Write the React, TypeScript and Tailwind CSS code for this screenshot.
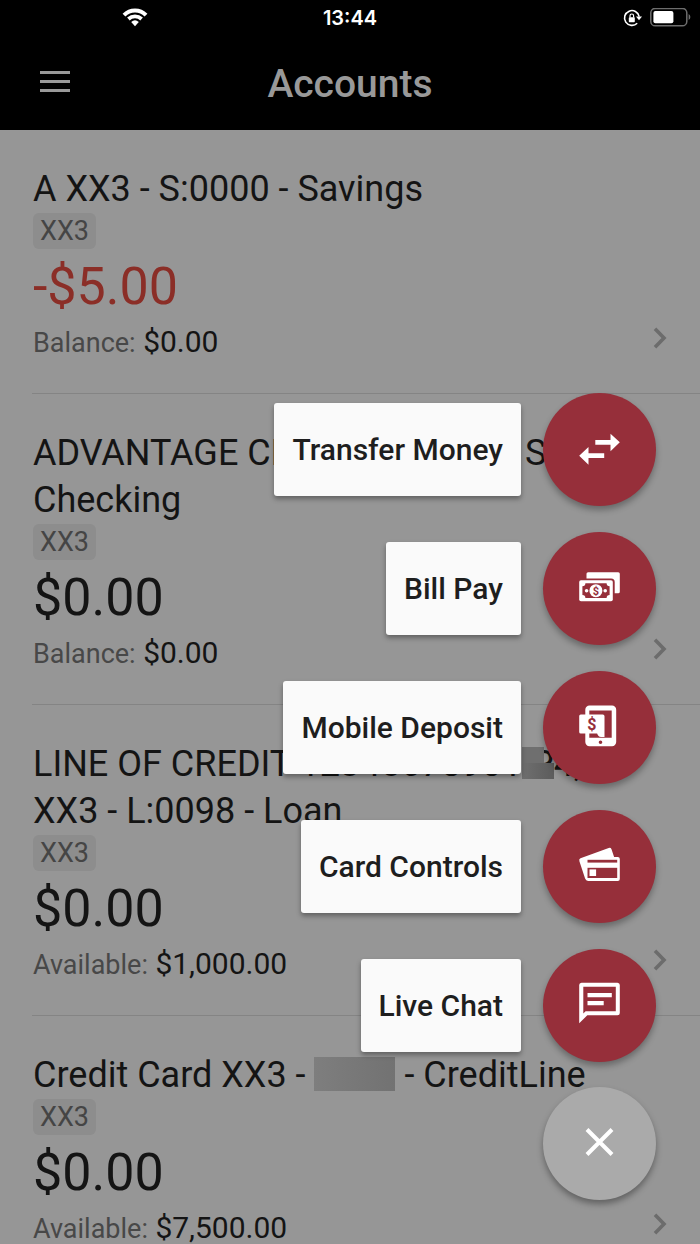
import { useState } from "react";
import type { ReactNode } from "react";

type Account = {
  id: string;
  title: ReactNode;
  badge: string;
  amount: string;
  negative?: boolean;
  label: string;
  value: string;
};

const accounts: Account[] = [
  {
    id: "savings",
    title: "A XX3 - S:0000 - Savings",
    badge: "XX3",
    amount: "-$5.00",
    negative: true,
    label: "Balance:",
    value: "$0.00",
  },
  {
    id: "checking",
    title: "ADVANTAGE CHECKING XX3 - S:0000 - Checking",
    badge: "XX3",
    amount: "$0.00",
    label: "Balance:",
    value: "$0.00",
  },
  {
    id: "loan",
    title: (
      <>
        LINE OF CREDIT 12345678901
        <span className="relative">
          {"\u00a0"}P4
          <span className="absolute top-1 left-0 h-4 w-[22px] bg-[#6f6f6f]" />
          <span className="absolute top-5 left-0 h-4 w-8 bg-linear-to-r from-[#6f6f6f] to-[#5c5c5c]" />
        </span>
        , <span className="whitespace-nowrap">XX3 - L:0098</span> - Loan
      </>
    ),
    badge: "XX3",
    amount: "$0.00",
    label: "Available:",
    value: "$1,000.00",
  },
  {
    id: "credit",
    title: (
      <>
        Credit Card XX3 -{" "}
        <span className="inline-block h-[34px] w-[81px] bg-linear-to-r from-[#7e7e7e] to-[#727272] align-[-4px]" />{" "}
        - CreditLine
      </>
    ),
    badge: "XX3",
    amount: "$0.00",
    label: "Available:",
    value: "$7,500.00",
  },
];

const actions: { label: string; icon: ReactNode }[] = [
  { label: "Transfer Money", icon: <TransferIcon /> },
  { label: "Bill Pay", icon: <BillIcon /> },
  { label: "Mobile Deposit", icon: <DepositIcon /> },
  { label: "Card Controls", icon: <CardsIcon /> },
  { label: "Live Chat", icon: <ChatIcon /> },
];

function Icon({ children }: { children: ReactNode }) {
  return (
    <svg viewBox="0 0 48 48" className="size-12" fill="#fff" aria-hidden="true">
      {children}
    </svg>
  );
}

function TransferIcon() {
  return (
    <Icon>
      <path d="M19.3 14H34.5V7.7L43.8 16.3L34.5 25.3V18.7H19.3Z" />
      <path d="M28.2 32H12.5V38.7L3.2 29.7L12.5 21V27.3H28.2Z" />
    </Icon>
  );
}

function BillIcon() {
  return (
    <Icon>
      <path d="M12.1 7.2H42.2A1.6 1.6 0 0 1 43.8 8.8V26.7A1.6 1.6 0 0 1 42.2 28.3H38.7V17.1A3.6 3.6 0 0 0 35.1 13.5H10.5V8.8A1.6 1.6 0 0 1 12.1 7.2Z" />
      <rect x="3.2" y="15.2" width="33.6" height="21" rx="1.8" />
      <path
        d="M9.4 18.3H30.6A3 3 0 0 0 33.6 21.3V30.1A3 3 0 0 0 30.6 33.1H9.4A3 3 0 0 0 6.4 30.1V21.3A3 3 0 0 0 9.4 18.3Z"
        fill="#962f3a"
      />
      <circle cx="10.6" cy="25.7" r="1.8" />
      <circle cx="29.2" cy="25.7" r="1.8" />
      <circle cx="19.9" cy="25.7" r="6.5" />
      <text x="19.9" y="29.5" textAnchor="middle" fontFamily="Roboto, sans-serif" fontSize="11" fontWeight="700" fill="#962f3a">
        $
      </text>
    </Icon>
  );
}

function DepositIcon() {
  return (
    <Icon>
      <path
        fillRule="evenodd"
        d="M13.5 1.5H36A4.2 4.2 0 0 1 40.2 5.7V38A4.2 4.2 0 0 1 36 42.2H13.5A4.2 4.2 0 0 1 9.3 38V5.7A4.2 4.2 0 0 1 13.5 1.5ZM13.3 6.5V33.8H35.7V6.5ZM24.5 36.4A1.8 1.8 0 1 0 24.5 40A1.8 1.8 0 1 0 24.5 36.4Z"
      />
      <path d="M4.8 10.5H26.8A1.8 1.8 0 0 1 28.5 12.3V33.1H25.1C22.7 33.1 22.1 31.5 21.1 29.5H4.8A1.6 1.6 0 0 1 3.2 27.9V12.1A1.6 1.6 0 0 1 4.8 10.5Z" />
      <text x="15.8" y="25.7" textAnchor="middle" fontFamily="Roboto, sans-serif" fontSize="16" fontWeight="700" fill="#962f3a">
        $
      </text>
    </Icon>
  );
}

function CardsIcon() {
  return (
    <Icon>
      <path d="M4.5 15.3L32.7 4.9Q34.7 4.2 35.5 6.2L38.1 14H41.8A2 2 0 0 1 43.8 16V35.9A2 2 0 0 1 41.8 37.9H12.1Q9.9 37.9 9.1 35.6L3.4 18.2Q2.7 16 4.5 15.3Z" />
      <path d="M11.5 16.8H41.2V19.6H11.5Z" fill="#962f3a" />
      <path d="M11.5 24.8H41.2V35H11.5Z" fill="#962f3a" />
      <path d="M13.5 26.4H20.1V33H13.5Z" />
    </Icon>
  );
}

function ChatIcon() {
  return (
    <Icon>
      <path
        fillRule="evenodd"
        d="M5.5 0.7H41.5A2.4 2.4 0 0 1 43.8 3.1V30.9A2.4 2.4 0 0 1 41.5 33.3H11.3L3.2 41.3V3.1A2.4 2.4 0 0 1 5.5 0.7ZM7.3 4.8V31.6L9.6 29.3H39.8V4.8Z"
      />
      <path d="M11.5 11H35.8V15.2H11.5ZM11.5 19H27.7V23.2H11.5Z" />
    </Icon>
  );
}

function StatusBar() {
  return (
    <div className="grid h-9 grid-cols-3 items-center text-white">
      <svg viewBox="0 1 26 20" className="ml-[122px] h-5 w-[26px]" fill="none" stroke="#fff" aria-label="Wi-Fi">
        <path d="M2 8.1A15.5 15.5 0 0 1 24 8.1" strokeWidth="4" />
        <path d="M6.4 12A9.8 9.8 0 0 1 19.6 12" strokeWidth="3.8" />
        <path d="M9.2 15A5.7 5.7 0 0 1 16.8 15L13 19.2Z" fill="#fff" stroke="none" />
      </svg>
      <span className="text-center font-[Inter,sans-serif] text-xl leading-5 font-semibold">13:44</span>
      <div className="flex items-center justify-end gap-2 pr-2">
        <svg viewBox="0 0 20 20" className="size-5" fill="none" stroke="#fff" aria-label="Orientation lock">
          <path d="M15.2 15.2A7.4 7.4 0 1 1 17.2 8.6" strokeWidth="1.6" />
          <path d="M14 8.4H20L17 12.2Z" fill="#fff" stroke="none" />
          <rect x="6.8" y="9.2" width="6" height="5" rx="0.8" fill="#fff" stroke="none" />
          <path d="M8 9.4V7.8A1.8 1.8 0 0 1 11.6 7.8V9.4" strokeWidth="1.2" />
        </svg>
        <svg viewBox="0 1 42 20" className="h-5 w-[42px]" fill="none" aria-label="Battery">
          <rect x="0.8" y="1.4" width="36" height="17.4" rx="4.4" stroke="#6d6d6d" strokeWidth="1.5" />
          <rect x="3.4" y="3.9" width="20" height="12.4" rx="2" fill="#fff" />
          <path d="M38.6 7.1A3.4 3.4 0 0 1 38.6 13.1Z" fill="#6d6d6d" />
        </svg>
      </div>
    </div>
  );
}

function Header() {
  return (
    <header className="bg-black">
      <StatusBar />
      <div className="grid h-[94px] grid-cols-[1fr_auto_1fr] items-center px-10">
        <button type="button" aria-label="Open menu" className="flex w-[30px] flex-col gap-[6px] pb-1">
          <span className="h-[3px] bg-[#999]" />
          <span className="h-[3px] bg-[#999]" />
          <span className="h-[3px] bg-[#999]" />
        </button>
        <h1 className="pt-0.5 text-[39px] font-medium text-[#999]">Accounts</h1>
      </div>
    </header>
  );
}

function AccountRow({ account }: { account: Account }) {
  return (
    <li className="ml-8 border-b border-[#848484] pt-9 pr-8 pb-[34px] pl-px">
      <h2 className="text-4xl leading-[47px]">{account.title}</h2>
      <div className="flex">
        <span className="rounded-md bg-[#8d8d8d] px-[7px] text-[27px] leading-9 text-[#454545]">{account.badge}</span>
      </div>
      <p className={account.negative ? "text-[52px] leading-[75px] text-[#8b2e27]" : "text-[52px] leading-[75px]"}>
        {account.amount}
      </p>
      <div className="flex h-[35px] items-start justify-between">
        <p className="text-[30px] leading-[35px]">
          <span className="text-[27px] text-[#484848]">{account.label}</span> {account.value}
        </p>
        <svg viewBox="0 0 16 28" className="h-7 w-4" fill="none" stroke="#6c6c6c" strokeWidth="3.6" aria-hidden="true">
          <path d="M3 4.8L12 14L3 23.2" />
        </svg>
      </div>
    </li>
  );
}

function SpeedDial() {
  const [open, setOpen] = useState(true);

  return (
    <div className="absolute right-11 bottom-11 flex flex-col items-end gap-[25px]">
      {open && (
        <div className="flex flex-col items-end gap-[26px]">
          {actions.map((action) => (
            <button key={action.label} type="button" className="flex items-center gap-[22px]">
              <span className="rounded-[3px] bg-[#fafafa] px-[18px] text-[30px] leading-[93px] font-medium text-[#1e1e1e] shadow-[0_3px_5px_rgba(0,0,0,0.35)]">
                {action.label}
              </span>
              <span className="flex size-[113px] items-center justify-center rounded-full bg-[#962f3a] shadow-[0_4px_6px_rgba(0,0,0,0.3)]">
                {action.icon}
              </span>
            </button>
          ))}
        </div>
      )}
      <button
        type="button"
        aria-label={open ? "Close actions" : "Open actions"}
        onClick={() => setOpen(!open)}
        className="flex size-[113px] items-center justify-center rounded-full bg-[#aaa] shadow-[0_4px_6px_rgba(0,0,0,0.35)]"
      >
        <svg viewBox="0 0 48 48" className="size-12" fill="none" stroke="#fff" strokeWidth="4" aria-hidden="true">
          <path d="M11 9.5L36 34.5M36 9.5L11 34.5" />
        </svg>
      </button>
    </div>
  );
}

export default function App() {
  return (
    <div className="relative flex h-screen flex-col overflow-hidden bg-[#969696] font-[Roboto,sans-serif] text-[#141414]">
      <Header />
      <ul className="min-h-0 flex-1 overflow-y-auto [scrollbar-width:none]">
        {accounts.map((account) => (
          <AccountRow key={account.id} account={account} />
        ))}
      </ul>
      <SpeedDial />
    </div>
  );
}
